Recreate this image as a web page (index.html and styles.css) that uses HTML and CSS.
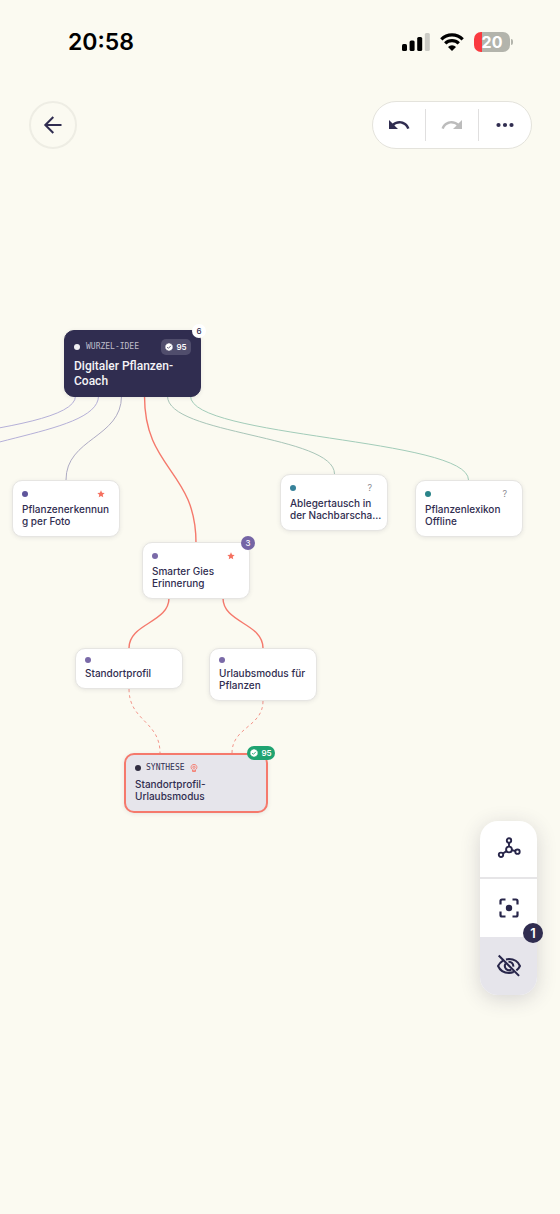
FILE: index.html
```html
<!DOCTYPE html>
<html lang="de">
<head>
<meta charset="utf-8">
<meta name="viewport" content="width=device-width, initial-scale=1">
<title>Digitaler Pflanzen-Coach</title>
<link rel="stylesheet" href="styles.css">
</head>
<body>
<svg width="0" height="0" class="defs" aria-hidden="true">
  <symbol id="star" viewBox="0 0 24 24"><path d="M12 1l3.200 7.200 7.800.8-5.900 5.200 1.700 7.800L12 18l-6.800 4 1.700-7.800L1 9l7.800-.8z" fill="currentColor"/></symbol>
  <symbol id="check" viewBox="0 0 24 24"><path d="M12 0l3.200 2.200 3.800.1 1.300 3.600 3.100 2.300L22.300 12l1.100 3.800-3.100 2.300-1.300 3.600-3.800.1L12 24l-3.200-2.200-3.800-.1-1.300-3.600L.6 15.800 1.700 12 .6 8.200l3.100-2.300L5 2.300l3.800-.1z" fill="#fff"/><path d="M6.500 12.300l3.700 3.700 7.300-7.500" fill="none" stroke="currentColor" stroke-width="2.800"/></symbol>
</svg>
<div class="app">
  <header class="top">
    <div class="status">
      <time class="clock">20:58</time>
      <div class="indicators">
        <svg width="28" height="20" viewBox="0 0 28 20" aria-label="Signal">
          <rect x="0" y="12" width="5" height="7" rx="1.500"/><rect x="7.600" y="8.500" width="5" height="10.500" rx="1.500"/><rect x="15.200" y="5" width="5" height="14" rx="1.500"/><rect x="22.800" y="1" width="5" height="18" rx="1.500" fill="#cbcbc5"/>
        </svg>
        <svg width="24" height="18" viewBox="0 0 24 18" aria-label="WLAN">
          <path d="M1.300 6.300a15.200 15.200 0 0 1 21.400 0M5.200 10.400a9.700 9.700 0 0 1 13.600 0" fill="none" stroke="#000" stroke-width="3.200"/>
          <path d="M12 18l-4-4.100a5.700 5.700 0 0 1 8 0z"/>
        </svg>
        <div class="battery"><span>20</span></div>
      </div>
    </div>
    <nav class="bar">
      <button class="back" aria-label="Zurück"><svg width="24" height="24" viewBox="0 0 24 24"><path d="M20.500 12H4.500M12.300 4L4.300 12l8 8" fill="none" stroke="currentColor" stroke-width="2"/></svg></button>
      <div class="pill">
        <button aria-label="Rückgängig"><svg width="24" height="24" viewBox="0 0 24 24"><path fill="currentColor" d="M12.500 8c-2.650 0-5.050.99-6.900 2.600L2 7v9h9l-3.620-3.620c1.390-1.160 3.160-1.880 5.120-1.880 3.540 0 6.550 2.310 7.600 5.500l2.370-.78C21.080 11.030 17.150 8 12.500 8z"/></svg></button>
        <button aria-label="Wiederholen" disabled><svg width="24" height="24" viewBox="0 0 24 24"><path fill="currentColor" d="M18.400 10.600C16.550 8.990 14.150 8 11.500 8c-4.650 0-8.580 3.030-9.960 7.220L3.900 16c1.050-3.190 4.050-5.500 7.600-5.500 1.950 0 3.730.72 5.120 1.880L13 16h9V7l-3.600 3.600z"/></svg></button>
        <button aria-label="Mehr"><svg width="24" height="24" viewBox="0 0 24 24" fill="currentColor"><circle cx="5.500" cy="12" r="2.100"/><circle cx="12" cy="12" r="2.100"/><circle cx="18.500" cy="12" r="2.100"/></svg></button>
      </div>
    </nav>
  </header>

  <main class="canvas">
    <svg class="edges" width="560" height="820" viewBox="0 0 560 820" fill="none" aria-hidden="true">
      <g stroke="#b5b0d8">
        <path d="M75.500 396C75.500 438-202 438-202 480"/>
        <path d="M98.500 396C98.500 438-68 438-68 480"/>
        <path d="M121.500 396C121.500 438 66 438 66 480" stroke="#aeabc4"/>
      </g>
      <g stroke="#a2ccb9">
        <path d="M167.500 396C167.500 435 334.500 435 334.500 474" stroke="#a8c5b8"/>
        <path d="M190.500 396C190.500 438 468.500 438 468.500 480"/>
      </g>
      <g stroke="#f5796c" stroke-width="1.400">
        <path d="M144.500 396C144.500 470 196 470 196 543"/>
        <path d="M169 598C169 623 129 623 129 648"/>
        <path d="M223 598C223 623 263 623 263 648"/>
      </g>
      <g stroke="#f3958a" stroke-dasharray="3 3">
        <path d="M129 689C129 721 160 721 160 753"/>
        <path d="M263 701C263 727 232 727 232 753"/>
      </g>
    </svg>

    <article class="node root" style="left:64px;top:330px">
      <div class="head"><i class="dot"></i><span class="kind">WURZEL-IDEE</span><span class="score"><svg width="8" height="8"><use href="#check"/></svg>95</span></div>
      <h1>Digitaler Pflanzen-<br>Coach</h1>
      <b class="count">6</b>
    </article>
    <article class="node marked" style="left:12px;top:480px">
      <div class="head"><i class="dot indigo"></i><svg class="star" width="8" height="8"><use href="#star"/></svg></div>
      <h2>Pflanzenerkennun<br>g per Foto</h2>
    </article>
    <article class="node marked" style="left:280px;top:474px">
      <div class="head"><i class="dot blue"></i><span class="ask">?</span></div>
      <h2>Ablegertausch in<br>der Nachbarscha...</h2>
    </article>
    <article class="node marked" style="left:415px;top:480px">
      <div class="head"><i class="dot teal"></i><span class="ask">?</span></div>
      <h2>Pflanzenlexikon<br>Offline</h2>
    </article>
    <article class="node marked" style="left:142px;top:542px">
      <div class="head"><i class="dot"></i><svg class="star" width="8" height="8"><use href="#star"/></svg></div>
      <h2>Smarter Gies<br>Erinnerung</h2>
      <b class="count purple">3</b>
    </article>
    <article class="node" style="left:75px;top:648px">
      <div class="head"><i class="dot"></i></div>
      <h2>Standortprofil</h2>
    </article>
    <article class="node" style="left:209px;top:648px">
      <div class="head"><i class="dot"></i></div>
      <h2>Urlaubsmodus für<br>Pflanzen</h2>
    </article>
    <article class="node synth" style="left:124px;top:753px">
      <div class="head"><i class="dot"></i><span class="kind">SYNTHESE</span>
        <svg width="8" height="8" viewBox="0 0 16 16" fill="none" stroke="#f5796c" stroke-width="1.800"><path d="M5 11.500A5.800 5.800 0 1 1 11 11.500V15H5z"/><circle cx="8" cy="6.500" r="2.300"/><path d="M5 12.500h6"/></svg></div>
      <h2>Standortprofil-<br>Urlaubsmodus</h2>
      <span class="score green"><svg width="8" height="8"><use href="#check"/></svg>95</span>
    </article>
  </main>

  <aside class="tools">
    <button aria-label="Struktur"><svg width="24" height="24" viewBox="0 0 24 24" fill="none" stroke="currentColor" stroke-width="1.900"><circle cx="12" cy="3.500" r="2.200"/><circle cx="12" cy="12.500" r="2.900"/><circle cx="4" cy="17.800" r="2.200"/><circle cx="20.500" cy="14.700" r="2.200"/><path d="M12 5.700V9.600M9.500 14.100l-3.600 2.400M14.900 13.100l3.300.9"/></svg></button>
    <button aria-label="Zentrieren"><svg width="24" height="24" viewBox="0 0 24 24" fill="none" stroke="currentColor" stroke-width="2.200"><path d="M3.500 8.500V5Q3.500 3.500 5 3.500H8.500M15.500 3.500H19Q20.500 3.500 20.500 5V8.500M20.500 15.500V19Q20.500 20.500 19 20.500H15.500M8.500 20.500H5Q3.500 20.500 3.500 19V15.500"/><circle cx="12" cy="12" r="3.200" fill="currentColor" stroke="none"/></svg></button>
    <button class="active" aria-label="Ausgeblendete Ideen"><svg width="26" height="26" viewBox="0 0 24 24" fill="none" stroke="currentColor" stroke-width="1.900"><path d="M6.200 7.200C4.300 8.300 2.800 10 1.900 12c1.700 3.900 5.600 6.400 10.100 6.400 1.500 0 3-.3 4.300-.8M9.200 5.900c.9-.2 1.800-.3 2.800-.3 4.500 0 8.400 2.500 10.100 6.400-.7 1.600-1.800 3-3.300 4.100M8.700 10a4 4 0 0 0 5.300 5.500M11.500 8.100a4 4 0 0 1 4.400 4.500M2.500 2.300l18.800 18.800"/></svg><b>1</b></button>
  </aside>
</div>
</body>
</html>
```

FILE: styles.css
```css
* { box-sizing: border-box; }
body {
  margin: 0;
  background: #fbfaf1;
  color: #302d50;
  font-family: Inter, "Noto Sans", sans-serif;
}
button {
  display: grid;
  place-items: center;
  padding: 0;
  border: 0;
  background: none;
  color: inherit;
  font: inherit;
}
svg { display: block; flex: none; }
.defs { position: absolute; }
.app { position: relative; min-height: 100vh; overflow: hidden; }

/* Header */
.top { position: relative; z-index: 2; }
.status {
  display: flex;
  justify-content: space-between;
  align-items: center;
  padding: 28px 50px 0 68px;
  color: #000;
}
.clock { font-size: 23px; line-height: 28px; font-weight: 600; }
.indicators { display: flex; align-items: center; gap: 10px; }
.battery {
  position: relative;
  width: 36px;
  height: 20px;
  border-radius: 7px;
  background: linear-gradient(90deg, #fa3a3f 8px, #b3b4ac 8px);
  color: #fff;
  font-size: 16px;
  line-height: 20px;
  font-weight: 700;
  text-align: center;
}
.battery::after {
  content: "";
  position: absolute;
  left: 37px;
  top: 7px;
  width: 2px;
  height: 6px;
  border-radius: 0 2px 2px 0;
  background: #b3b4ac;
}
.bar {
  display: flex;
  justify-content: space-between;
  padding: 45px 28px 0 29px;
}
.back {
  width: 48px;
  height: 48px;
  border: 2px solid #eeede4;
  border-radius: 50%;
}
.pill {
  display: flex;
  align-items: center;
  height: 48px;
  border: 1px solid #e4e3dc;
  border-radius: 24px;
  background: #fff;
}
.pill button { width: 52px; height: 32px; }
.pill button + button { width: 53px; border-left: 1px solid #e0dfdf; }
.pill button:disabled { color: #bcbcbc; }

/* Idea map */
.canvas { position: absolute; inset: 0; }
.edges { position: absolute; left: 0; top: 0; }
.node {
  position: absolute;
  width: 108px;
  padding: 8px 9px 9px;
  border: 1px solid #e6e5e2;
  border-radius: 10px;
  background: #fff;
  box-shadow: 0 1px 4px rgba(48, 45, 80, .1);
}
.head { display: flex; align-items: center; height: 6px; margin-bottom: 4px; }
.marked .head { height: 10px; }
.dot { width: 6px; height: 6px; border-radius: 50%; background: #7a6aa8; }
.indigo { background: #5f559b; }
.blue { background: #37829a; }
.teal { background: #2a8489; }
.star, .ask { margin: 0 5px 0 auto; color: #f5705f; }
.ask { margin-right: 6px; color: #8c8b93; font-size: 9px; line-height: 10px; }
h1, h2 { margin: 0; font-weight: 500; white-space: nowrap; }
h2 { font-size: 10px; line-height: 12px; }
h1 { font-family: Roboto, Inter, sans-serif; font-size: 12px; line-height: 15px; }
.kind { font: 8px/10px "DejaVu Sans Mono", monospace; }
.count {
  position: absolute;
  right: -6px;
  top: -7px;
  width: 14px;
  height: 14px;
  border-radius: 50%;
  background: #fff;
  color: #302d50;
  font-size: 8px;
  line-height: 14px;
  font-weight: 500;
  text-align: center;
}
.purple { background: #7565a5; color: #fff; }
.score {
  display: flex;
  align-items: center;
  justify-content: center;
  gap: 3px;
  color: #504d6c;
  font-size: 8px;
  font-weight: 600;
}
.root {
  width: 137px;
  padding: 8px 9px 7px;
  border-color: #302d50;
  background: #302d50;
  color: #f4f3f6;
}
.root .head { height: 16px; gap: 6px; margin-bottom: 4px; }
.root .dot { background: #efeef2; }
.root .kind { color: #bfbdca; }
.root .score {
  width: 30px;
  height: 16px;
  margin-left: auto;
  border-radius: 5px;
  background: #504d6c;
  color: #fff;
}
.root .score svg { color: #504d6c; }
.synth {
  width: 144px;
  border: 2px solid #f5796c;
  background: #e6e5eb;
}
.synth .head { height: 10px; gap: 5px; margin: 0 0 5px; }
.synth .dot { background: #302d40; }
.green {
  position: absolute;
  right: -9px;
  top: -9px;
  width: 28px;
  height: 14px;
  border-radius: 7px;
  background: #1fa371;
  color: #fff;
}
.green svg { color: #1fa371; }

/* Floating tools */
.tools {
  position: absolute;
  z-index: 2;
  top: 821px;
  right: 23px;
  width: 57px;
  border-radius: 18px;
  background: #fff;
  box-shadow: 0 4px 20px rgba(48, 45, 80, .18);
}
.tools button { position: relative; width: 100%; height: 58px; color: #28264a; }
.tools button:first-child { border-bottom: 2px solid #e6e5e7; }
.tools .active { border-radius: 0 0 18px 18px; background: #e6e5eb; }
.tools b {
  position: absolute;
  top: -14px;
  right: -6px;
  width: 20px;
  height: 20px;
  border-radius: 50%;
  background: #302d50;
  color: #fff;
  font-size: 13px;
  line-height: 20px;
  font-weight: 600;
}
```
